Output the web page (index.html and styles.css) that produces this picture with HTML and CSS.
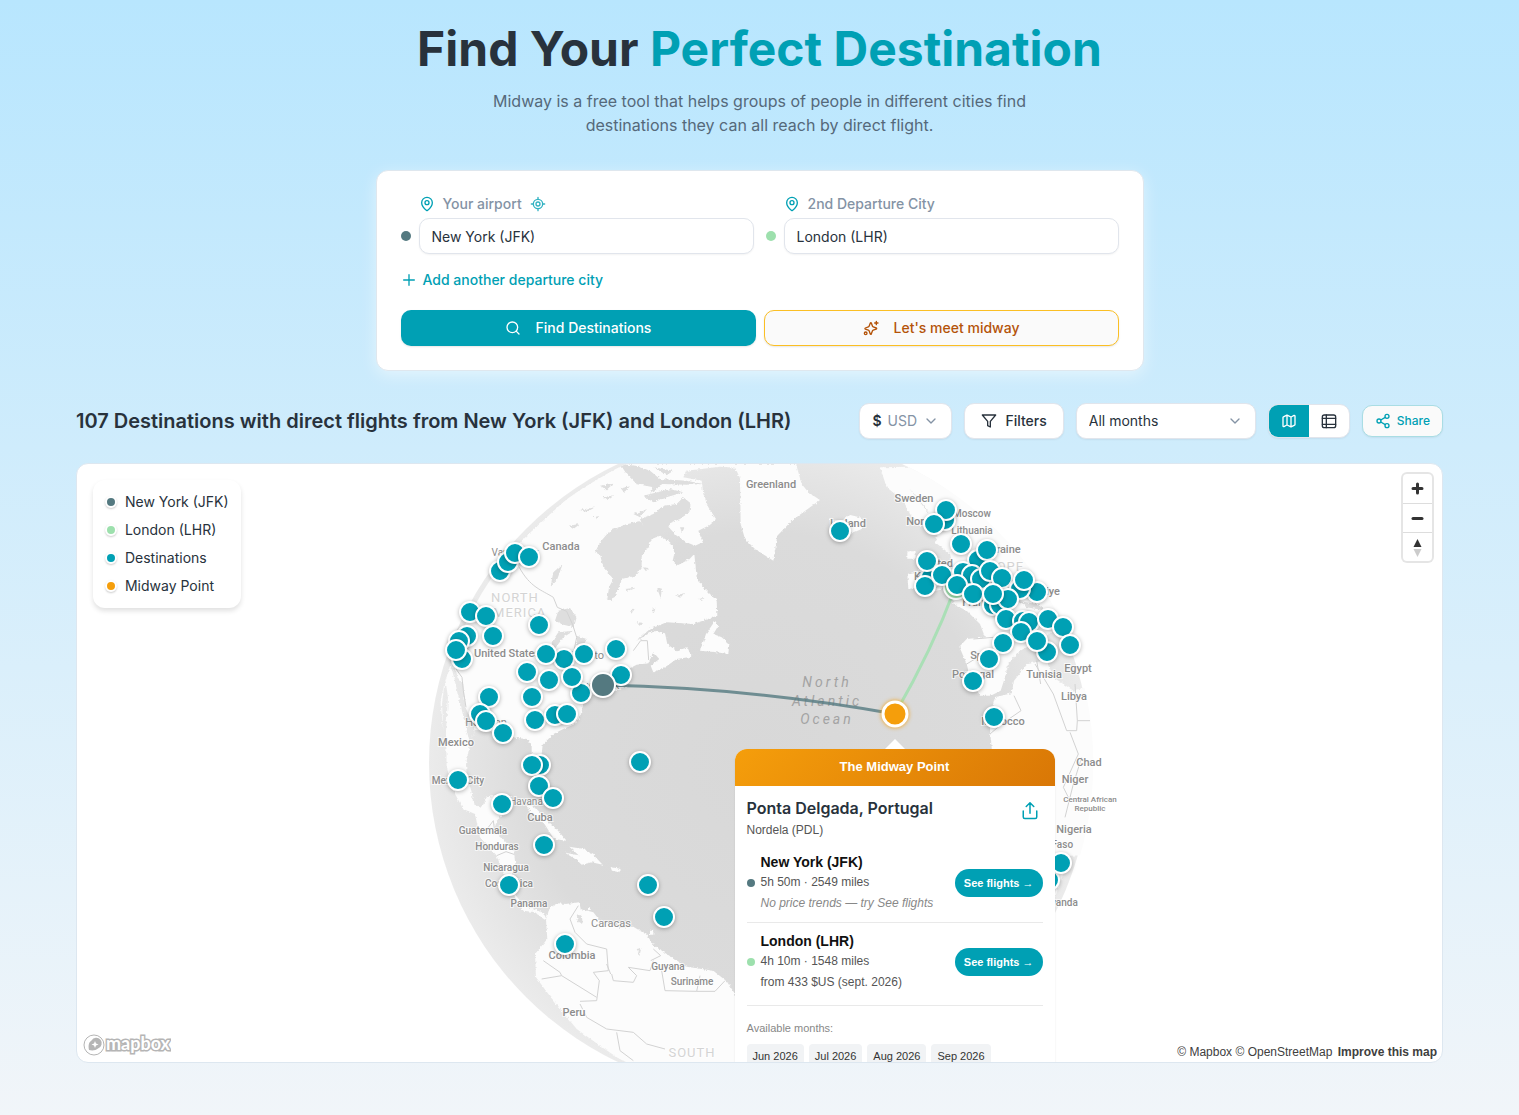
FILE: index.html
```html
<!DOCTYPE html>
<html lang="en">
<head>
    <meta charset="UTF-8">
    <meta name="viewport" content="width=device-width, initial-scale=1.0">
    <title>Midway - Find Your Perfect Destination</title>
    <link rel="stylesheet" href="styles.css">
</head>
<body>
    <header class="hero">
        <h1>Find Your <span>Perfect Destination</span></h1>
        <p>Midway is a free tool that helps groups of people in different cities find destinations they can all reach by direct flight.</p>
    </header>

    <form class="search-card" onsubmit="return false">
        <div class="cities">
            <div class="city">
                <div class="city-label">
                    <svg class="icon" viewBox="0 0 24 24"><path d="M20 10c0 5-5.500 10.200-7.400 11.800a1 1 0 0 1-1.200 0C9.500 20.200 4 15 4 10a8 8 0 0 1 16 0"/><circle cx="12" cy="10" r="3"/></svg>
                    <label for="city-1">Your airport</label>
                    <button type="button" class="locate" aria-label="Use my location">
                        <svg class="icon" viewBox="0 0 24 24"><path d="M2 12h3M19 12h3M12 2v3M12 19v3"/><circle cx="12" cy="12" r="7"/><circle cx="12" cy="12" r="3"/></svg>
                    </button>
                </div>
                <div class="city-field">
                    <span class="dot slate"></span>
                    <input type="text" id="city-1" value="New York (JFK)">
                </div>
            </div>
            <div class="city">
                <div class="city-label">
                    <svg class="icon" viewBox="0 0 24 24"><path d="M20 10c0 5-5.500 10.200-7.400 11.800a1 1 0 0 1-1.200 0C9.500 20.200 4 15 4 10a8 8 0 0 1 16 0"/><circle cx="12" cy="10" r="3"/></svg>
                    <label for="city-2">2nd Departure City</label>
                </div>
                <div class="city-field">
                    <span class="dot green"></span>
                    <input type="text" id="city-2" value="London (LHR)">
                </div>
            </div>
        </div>
        <button type="button" class="add-city">
            <svg class="icon" viewBox="0 0 24 24"><path d="M4 12h16M12 4v16"/></svg>
            Add another departure city
        </button>
        <div class="actions">
            <button type="submit" class="btn-find">
                <svg class="icon" viewBox="0 0 24 24"><circle cx="11" cy="11" r="8"/><path d="m21 21-4.300-4.300"/></svg>
                Find Destinations
            </button>
            <button type="button" class="btn-midway">
                <svg class="icon" viewBox="0 0 24 24"><path d="M11 4.500c.3-.7 1.200-.7 1.500 0l1.600 4.600a2 2 0 0 0 1.200 1.200l4.600 1.700c.8.3.8 1.300 0 1.600l-4.600 1.600a2 2 0 0 0-1.200 1.200l-1.700 4.700c-.2.700-1.200.7-1.500 0l-1.600-4.700a2 2 0 0 0-1.200-1.200l-4.600-1.600c-.8-.3-.8-1.300 0-1.600l4.600-1.700a2 2 0 0 0 1.200-1.200z"/><path d="M20 2v5M17.500 4.500h5"/><circle cx="4" cy="20" r="2"/></svg>
                Let's meet midway
            </button>
        </div>
    </form>

    <main class="results">
        <div class="toolbar">
            <h2>107 Destinations with direct flights from New York (JFK) and London (LHR)</h2>
            <div class="tools">
                <div class="select currency">
                    <label for="currency">$</label>
                    <select id="currency"><option>USD</option><option>EUR</option><option>GBP</option></select>
                    <svg class="icon chevron" viewBox="0 0 24 24"><path d="m6 9 6 6 6-6"/></svg>
                </div>
                <button type="button" class="btn-filters">
                    <svg class="icon" viewBox="0 0 24 24"><path d="M22 3H2l8 9.500V19l4 2v-8.500z"/></svg>
                    Filters
                </button>
                <div class="select months">
                    <select aria-label="Month"><option>All months</option></select>
                    <svg class="icon chevron" viewBox="0 0 24 24"><path d="m6 9 6 6 6-6"/></svg>
                </div>
                <div class="view-toggle">
                    <button type="button" class="active" aria-label="Map view">
                        <svg class="icon" viewBox="0 0 24 24"><path d="M14.100 5.600a2 2 0 0 0 1.800 0l3.700-1.900A1 1 0 0 1 21 4.600v12.800a1 1 0 0 1-.6.900l-4.500 2.200a2 2 0 0 1-1.800 0l-4.200-2.100a2 2 0 0 0-1.800 0l-3.700 1.900A1 1 0 0 1 3 19.400V6.600a1 1 0 0 1 .6-.9l4.500-2.200a2 2 0 0 1 1.800 0zM15 5.800v15M9 3.200v15"/></svg>
                    </button>
                    <button type="button" aria-label="Table view">
                        <svg class="icon" viewBox="0 0 24 24"><rect x="2" y="3" width="20" height="19" rx="3"/><path d="M8 3v19M2 8h20M2 17h20"/></svg>
                    </button>
                </div>
                <button type="button" class="btn-share">
                    <svg class="icon" viewBox="0 0 24 24"><circle cx="18" cy="5" r="3"/><circle cx="6" cy="12" r="3"/><circle cx="18" cy="19" r="3"/><path d="m8.600 13.500 6.800 4M15.400 6.500l-6.800 4"/></svg>
                    Share
                </button>
            </div>
        </div>

        <div class="map">
            <div class="globe">
                <svg class="globe-canvas" viewBox="400 464 720 598">
                    <defs>
                        <radialGradient id="ocean">
                            <stop offset="0" stop-color="#d8d8d8"/>
                            <stop offset="0.7" stop-color="#dbdbdb"/>
                            <stop offset="1" stop-color="#ebebeb"/>
                        </radialGradient>
                        <clipPath id="disc"><circle cx="1032" cy="897" r="988"/></clipPath>
                        <filter id="coast" x="0" y="0" width="1" height="1">
                            <feTurbulence type="fractalNoise" baseFrequency="0.12" numOctaves="3" seed="4"/>
                            <feDisplacementMap in="SourceGraphic" scale="10" xChannelSelector="R" yChannelSelector="G"/>
                        </filter>
                    </defs>
                    <circle cx="760" cy="763" r="331" fill="url(#ocean)"/>
                    <!-- land is drawn three times larger than the globe -->
                    <svg x="420" y="464" width="700" height="598" viewBox="0 0 2100 1794">
                        <g clip-path="url(#disc)">
                            <g class="land" filter="url(#coast)">
                                <!-- North and Central America -->
                                <path d="M610 0 450 95 300 235 205 350 140 450 100 560 92 600 108 620 112 640 130 660 136 730 150 760 148 740 165 800 150 840 138 900 140 930 155 985 160 1020 185 1032 200 1000 240 992 275 1000 262 1040 230 1070 222 1100 250 1125 282 1165 286 1200 275 1240 285 1290 310 1325 345 1335 372 1350 382 1372 370 1364 345 1345 310 1340 285 1300 255 1235 228 1172 180 1120 165 1050 130 1035 105 990 80 910 78 800 84 700 75 640 66 720 70 800 60 700 92 600 150 840 165 798 210 800 250 812 290 822 322 825 335 845 335 880 345 925 362 925 365 870 368 842 400 810 430 795 465 780 482 755 490 720 505 700 520 690 560 690 605 672 625 665 605 645 612 622 650 602 685 598 700 565 718 585 692 605 700 625 735 610 770 585 815 578 802 550 770 562 742 540 735 508 700 500 650 530 690 495 740 475 820 480 892 455 890 410 850 370 830 340 823 270 808 286 770 305 758 290 765 260 750 235 720 215 695 225 700 200 745 188 770 215 800 235 825 245 848 235 835 200 862 187 888 165 865 130 850 90 845 50 790 40 800 20 900 8 960 12 960 0Z"/>
                                <path d="M840 560 858 510 885 470 895 485 880 510 905 520 928 540 925 570 890 565Z"/>
                                <!-- Greenland and Iceland -->
                                <path d="M940 0 960 42 962 180 975 225 1005 255 1060 290 1072 215 1115 170 1200 108 1165 85 1145 60 1128 0Z"/>
                                <path d="M1228 162 1258 178 1288 152 1330 163 1325 195 1285 212 1240 200Z"/>
                                <!-- Caribbean -->
                                <path d="M318 1022 350 1035 385 1072 412 1098 440 1130 402 1125 372 1078 335 1050Z"/>
                                <path d="M448 1148 490 1155 520 1172 548 1202 515 1195 485 1202 470 1188 435 1166 476 1174Z"/>
                                <path d="M572 1210 602 1215 598 1225 576 1220ZM690 1400h10v12h-10zM504 1330h8v8h-8z"/>
                                <!-- South America -->
                                <path d="M378 1370 388 1332 412 1318 440 1320 478 1315 482 1335 520 1345 540 1370 600 1392 640 1388 680 1412 700 1442 740 1470 800 1508 880 1520 920 1552 945 1590 1000 1800 620 1800 540 1745 470 1695 425 1640 385 1590 348 1540 345 1470 382 1425Z"/>
                                <!-- Europe -->
                                <path d="M1380 10 1400 70 1450 110 1470 150 1500 185 1530 190 1555 205 1545 235 1590 270 1600 310 1570 350 1600 385 1600 420 1640 440 1680 480 1695 520 1640 525 1618 548 1640 600 1650 640 1680 695 1712 695 1742 680 1755 640 1765 600 1800 560 1860 530 1900 500 1960 540 2000 600 2100 500 2000 0Z"/>
                                <path d="M1490 290 1530 265 1560 330 1592 352 1560 378 1520 385ZM1462 262h25v22h-25zM1462 330 1495 320 1500 370 1465 375Z"/>
                                <!-- Africa -->
                                <path d="M1725 700 1775 688 1782 650 1822 600 1880 588 1900 640 1960 680 2100 640 2100 1170 1950 1175 1905 1300 1870 1230 1720 900 1710 800 1712 750Z"/>
                            </g>
                            <g class="water" filter="url(#coast)">
                                <path d="M525 265 540 235 570 200 620 180 660 172 675 192 710 210 695 225 685 250 665 275 665 310 645 335 605 345 595 375 577 412 562 405 567 370 580 345 550 310 540 272Z"/>
                                <path d="M660 165 700 150 730 125 770 120 790 100 812 118 808 145 780 165 750 178 740 200 700 215 670 190ZM600 0 650 5 690 20 720 45 800 50 850 60 800 62 730 60 690 90 700 70 650 60 620 30Z"/>
                                <path d="M670 95 750 75 790 85 740 100 700 115ZM640 150l40-14-20 24zM700 10l60 10-20 14zM780 190l14 0-8 16zM600 75l30-8-16 16zM550 100l30-6-20 14z"/>
                                <path d="M480 138 525 130 500 145ZM445 185 480 180 460 195ZM540 65l40-6-20 18zM520 160l18-4-8 10z"/>
                                <path d="M400 325 428 300 412 345 392 365ZM415 440 450 432 470 460 462 490 430 482 405 470ZM395 535 415 505 462 500 430 520 400 560ZM470 515 500 525 490 545 472 548ZM470 1355 485 1352 488 1378 475 1375ZM650 1455l14-3-6 25z"/>
                                <path d="M615 375l34-4-24 10zM668 310l18 2-8 10zM710 370l16 4-4 28zM765 395l28-8-12 14zM695 435l12-4-6 18zM630 440l16-8-10 14zM650 475l20 2-12 8zM835 405l24-4-18 8z"/>
                                <path d="M1465 70 1500 110 1530 150 1550 170 1520 140ZM1790 410 1850 420 1880 440 1820 430Z"/>
                            </g>
                            <g class="borders">
                                <path d="M298 310C330 370 365 378 400 400L412 430 440 442 458 482 470 520 462 560 500 590M640 560 662 530 682 530 686 588M108 615l18 25 4 40 8 50M158 735l22 40"/>
                                <path d="M180 1110l25-20 15-20 5 40M230 1175l28-12 24 8M475 1325 450 1365 465 1405 500 1440 560 1455 565 1520 520 1525 538 1550 530 1610 480 1612M370 1490 420 1525 425 1535 365 1545M425 1535 530 1600M575 1530 580 1550 640 1555 650 1535 625 1510 690 1520 700 1490M560 1500 572 1530M700 1455l22 20-30 15M725 1520 735 1580 830 1582 885 1582 915 1550M830 1582 840 1535M480 1620 500 1660 560 1695 640 1705 680 1740 735 1755M590 1705 600 1760 640 1790"/>
                                <path d="M1640 600l25-15M1710 810 1745 780 1803 740 1782 695M1845 600 1870 640 1900 690 1940 800 1970 800 1972 770 2010 770M1850 590 1862 660M1965 660 1972 770M1660 525 1720 520M1950 805 1975 870 1930 970 1945 1000M1985 880 1960 960 1935 1060"/>
                            </g>
                        </g>
                    </svg>
                    <g class="labels" id="labels"></g>
                    <g class="ocean-label">
                        <text x="827" y="687">North</text>
                        <text x="827" y="706">Atlantic</text>
                        <text x="827" y="724">Ocean</text>
                    </g>
                    <path class="route slate" d="M603 685Q752 688 895 714"/>
                    <path class="route green" d="M955 588Q932 650 895 714"/>
                    <circle class="pin origin-green" cx="956" cy="587" r="12"/>
                    <g id="pins"></g>
                    <circle class="pin origin-slate" cx="603" cy="685" r="12"/>
                    <circle class="pin midway" cx="895" cy="714" r="12"/>
                </svg>

                <div class="popup">
                    <div class="popup-header">The Midway Point</div>
                    <div class="popup-body">
                        <div class="popup-title">
                            <div>
                                <h3>Ponta Delgada, Portugal</h3>
                                <p>Nordela (PDL)</p>
                            </div>
                            <button type="button" aria-label="Share destination">
                                <svg class="icon" viewBox="0 0 24 24"><path d="M3 12v8a2 2 0 0 0 2 2h14a2 2 0 0 0 2-2v-8M17 6l-5-5-5 5M12 1v14"/></svg>
                            </button>
                        </div>
                        <div class="flight">
                            <span class="dot slate"></span>
                            <div class="flight-info">
                                <strong>New York (JFK)</strong>
                                <span>5h 50m · 2549 miles</span>
                                <em>No price trends — try See flights</em>
                            </div>
                            <a href="#jfk">See flights →</a>
                        </div>
                        <div class="flight">
                            <span class="dot green"></span>
                            <div class="flight-info">
                                <strong>London (LHR)</strong>
                                <span>4h 10m · 1548 miles</span>
                                <span class="price">from 433 $US (sept. 2026)</span>
                            </div>
                            <a href="#lhr">See flights →</a>
                        </div>
                        <p class="months-title">Available months:</p>
                        <div class="month-list">
                            <span>Jun 2026</span>
                            <span>Jul 2026</span>
                            <span>Aug 2026</span>
                            <span>Sep 2026</span>
                        </div>
                    </div>
                </div>
            </div>

            <ul class="legend">
                <li><span class="dot slate"></span>New York (JFK)</li>
                <li><span class="dot green"></span>London (LHR)</li>
                <li><span class="dot teal"></span>Destinations</li>
                <li><span class="dot orange"></span>Midway Point</li>
            </ul>

            <div class="map-controls">
                <button type="button" aria-label="Zoom in"><svg viewBox="0 0 29 29"><path class="stroke" d="M10 14.500h9M14.500 10v9"/></svg></button>
                <button type="button" aria-label="Zoom out"><svg viewBox="0 0 29 29"><path class="stroke" d="M10 14.500h9"/></svg></button>
                <button type="button" aria-label="Reset bearing"><svg viewBox="0 0 29 29"><path fill="#333" d="m10.500 14 4-8 4 8z"/><path fill="#ccc" d="m10.500 16 4 8 4-8z"/></svg></button>
            </div>

            <svg class="map-logo" viewBox="0 0 88 24">
                <circle cx="11" cy="12" r="10"/>
                <path class="mark" d="M6 17c-1-5 0-8 2.500-9.500A5.500 5.500 0 1 1 15 15.500C13 17.500 9 18 6 17z"/>
                <path class="star" d="m12 8 1 2.500 2.500 1-2.500 1-1 2.500-1-2.500-2.500-1 2.500-1z"/>
                <text x="23" y="17">mapbox</text>
            </svg>

            <div class="attribution">
                <a href="#mapbox">© Mapbox</a>
                <a href="#osm">© OpenStreetMap</a>
                <a href="#improve"><b>Improve this map</b></a>
            </div>
        </div>
    </main>

    <script src="map.js"></script>
</body>
</html>
```

FILE: styles.css
```css
* {
    box-sizing: border-box;
}
body {
    margin: 0;
    min-height: 100vh;
    padding-bottom: 52px;
    font-family: Inter, "Liberation Sans", sans-serif;
    font-size: 14px;
    line-height: 20px;
    color: #28323c;
    background: linear-gradient(to bottom, #b8e6fe, #f1f5f9);
}
button, input, select {
    font: inherit;
    color: inherit;
}
button {
    display: inline-flex;
    align-items: center;
    justify-content: center;
    padding: 0;
    border: none;
    background: none;
    cursor: pointer;
}
a {
    color: inherit;
    text-decoration: none;
}
.icon {
    width: 16px;
    height: 16px;
    flex-shrink: 0;
    fill: none;
    stroke: currentColor;
    stroke-width: 2;
    stroke-linecap: round;
    stroke-linejoin: round;
}
.dot {
    width: 10px;
    height: 10px;
    flex-shrink: 0;
    border-radius: 50%;
}
.dot.slate {
    background-color: #547980;
}
.dot.green {
    background-color: #9de0ad;
}
.dot.teal {
    background-color: #00a0b4;
}
.dot.orange {
    background-color: #f59e0b;
}

/* Hero */
.hero {
    padding-top: 19px;
    text-align: center;
}
.hero h1 {
    margin: 0;
    font-size: 48px;
    line-height: 60px;
    font-weight: 700;
}
.hero h1 span {
    color: #00a0b4;
}
.hero p {
    max-width: 576px;
    margin: 10px auto 0;
    font-size: 16px;
    line-height: 24px;
    color: #55697a;
}

/* Search card */
.search-card {
    max-width: 768px;
    margin: 33px auto 0;
    padding: 24px;
    border: 1px solid #dfe7ee;
    border-radius: 12px;
    background-color: #fff;
    box-shadow: 0 4px 16px rgba(255, 255, 255, 0.5);
}
.cities {
    display: grid;
    grid-template-columns: 1fr 1fr;
    gap: 12px;
}
.city-label {
    display: flex;
    align-items: center;
    gap: 8px;
    height: 18px;
    margin: 0 0 5px 18px;
    font-weight: 500;
    color: #8493a5;
}
.city-label .icon {
    color: #00a0b4;
}
.locate {
    opacity: 0.8;
}
.city-field {
    display: flex;
    align-items: center;
    gap: 8px;
}
.city-field input {
    width: 100%;
    height: 36px;
    padding: 0 12px;
    border: 1px solid #e1e5ec;
    border-radius: 10px;
    background-color: #fff;
    box-shadow: 0 1px 2px rgba(0, 0, 0, 0.05);
}
.add-city {
    gap: 6px;
    height: 20px;
    margin-top: 16px;
    font-weight: 500;
    color: #00a0b4;
}
.actions {
    display: grid;
    grid-template-columns: 1fr 1fr;
    gap: 8px;
    margin-top: 17px;
}
.actions button {
    gap: 15px;
    height: 36px;
    border-radius: 10px;
    font-weight: 500;
    box-shadow: 0 1px 2px rgba(0, 0, 0, 0.1);
}
.actions .btn-find {
    color: #fff;
    background-color: #00a0b4;
}
.actions .btn-midway {
    border: 1px solid #fbbf24;
    color: #b45309;
    background-color: #fafafa;
}

/* Results toolbar */
.results {
    width: 90%;
    margin: 32px auto 0;
}
.toolbar {
    display: flex;
    align-items: center;
    justify-content: space-between;
    height: 36px;
}
.toolbar h2 {
    margin: 0;
    font-size: 20px;
    line-height: 28px;
    font-weight: 600;
}
.tools {
    display: flex;
    align-items: center;
    gap: 12px;
}
.select, .btn-filters, .view-toggle, .btn-share {
    border: 1px solid #e1e5ec;
    border-radius: 10px;
    background-color: #fff;
    box-shadow: 0 1px 2px rgba(0, 0, 0, 0.06);
}
.select {
    display: flex;
    align-items: center;
    position: relative;
    height: 36px;
}
.select select {
    width: 100%;
    height: 34px;
    padding: 0 12px;
    border: none;
    border-radius: 10px;
    background: none;
    appearance: none;
}
.chevron {
    position: absolute;
    right: 12px;
    color: #8493a5;
    pointer-events: none;
}
.currency {
    width: 93px;
    padding-left: 12px;
}
.currency label {
    font-weight: 600;
}
.currency select {
    padding: 0 6px;
    color: #8493a5;
}
.months {
    width: 180px;
}
.btn-filters {
    gap: 8px;
    height: 36px;
    padding: 0 16px;
    font-weight: 500;
}
.view-toggle {
    display: flex;
    height: 34px;
    overflow: hidden;
}
.view-toggle button {
    width: 40px;
}
.view-toggle .active {
    color: #fff;
    background-color: #00a0b4;
}
.btn-share {
    gap: 6px;
    height: 32px;
    padding: 0 12px;
    border-color: #a9dde4;
    font-size: 12px;
    font-weight: 500;
    color: #00a0b4;
    background-color: #fafafa;
}

/* Map */
.map {
    position: relative;
    height: 600px;
    margin-top: 24px;
    border: 1px solid #dde7f0;
    border-radius: 12px;
    background-color: #fff;
    overflow: hidden;
}
.globe {
    position: relative;
    width: 720px;
    height: 598px;
    margin: 0 auto;
}
.globe-canvas {
    display: block;
    width: 100%;
    height: 100%;
}
.land {
    fill: #fcfcfc;
}
.water {
    fill: #dedede;
}
.borders {
    fill: none;
    stroke: #d2d2d2;
    stroke-width: 3;
    stroke-linejoin: round;
}
.labels {
    font-family: Roboto, "Liberation Sans", sans-serif;
    font-size: 11px;
    font-weight: 500;
    fill: #8c8c8c;
    stroke: #fff;
    stroke-width: 2px;
    stroke-opacity: 0.7;
    paint-order: stroke;
    text-anchor: middle;
}
.labels .city-name {
    font-weight: 400;
}
.labels .small {
    font-size: 10px;
}
.labels .tiny {
    font-size: 8px;
}
.labels .continent {
    font-size: 13px;
    font-weight: 400;
    letter-spacing: 1px;
    fill: #d4d4d4;
}
.ocean-label {
    font-family: Roboto, "Liberation Sans", sans-serif;
    font-size: 14px;
    font-style: italic;
    letter-spacing: 3px;
    fill: #a3a3a3;
    text-anchor: middle;
}
.route {
    fill: none;
    stroke-width: 3;
    stroke-opacity: 0.8;
}
.route.slate {
    stroke: #547980;
}
.route.green {
    stroke: #9de0ad;
}
.pin {
    fill: #00a0b4;
    stroke: #fff;
    stroke-width: 2;
    filter: drop-shadow(0 1px 2px rgba(0, 0, 0, 0.3));
}
.pin.origin-slate {
    fill: #547980;
}
.pin.origin-green {
    fill: #9de0ad;
}
.pin.midway {
    fill: #f59e0b;
    stroke-width: 3;
    filter: drop-shadow(0 0 2px #f59e0b);
}

/* Popup */
.popup {
    position: absolute;
    top: 285px;
    left: 335px;
    width: 320px;
    border-radius: 12px;
    background-color: #fff;
    box-shadow: 0 1px 2px rgba(0, 0, 0, 0.1);
    font-family: "Liberation Sans", Arial, sans-serif;
    font-size: 12px;
}
.popup::before {
    content: "";
    position: absolute;
    top: -10px;
    left: 50%;
    margin-left: -10px;
    border: 10px solid transparent;
    border-top: none;
    border-bottom-color: #fff;
}
.popup-header {
    position: relative;
    padding: 8px 12px 9px;
    border-radius: 12px 12px 0 0;
    color: #fff;
    font-size: 13px;
    font-weight: 700;
    text-align: center;
    background: linear-gradient(135deg, #f59e0b, #d97706);
}
.popup-body {
    padding: 12px;
}
.popup-title {
    display: flex;
    justify-content: space-between;
    margin-bottom: 4px;
}
.popup-title h3 {
    margin: 0 0 2px;
    font-family: Inter, "Liberation Sans", sans-serif;
    font-size: 16px;
    font-weight: 600;
}
.popup-title p {
    margin: 0;
    color: #555;
}
.popup-title button {
    width: 26px;
    height: 26px;
    color: #00a0b4;
}
.popup-title .icon {
    width: 18px;
    height: 18px;
}
.flight {
    display: flex;
    align-items: center;
    gap: 6px;
    padding: 8px 0;
    border-bottom: 1px solid #e9e9e9;
}
.flight + .flight {
    padding-bottom: 12px;
}
.popup .dot {
    width: 8px;
    height: 8px;
}
.flight-info {
    display: flex;
    flex-direction: column;
    flex: 1;
    color: #555;
}
.flight-info strong {
    font-size: 14px;
    color: #111;
}
.flight-info em {
    line-height: 22px;
    color: #888;
}
.flight-info .price {
    line-height: 22px;
}
.flight a {
    padding: 0 9px;
    border-radius: 14px;
    font-size: 11px;
    font-weight: 700;
    line-height: 28px;
    color: #fff;
    background-color: #00a0b4;
}
.months-title {
    margin: 12px 0 6px;
    font-size: 11px;
    color: #888;
}
.month-list {
    display: flex;
    gap: 5px;
}
.month-list span {
    padding: 2px 6px;
    border-radius: 4px;
    font-size: 11px;
    color: #333;
    background-color: #f1f3f5;
}

/* Things that sit over the map */
.legend {
    position: absolute;
    top: 16px;
    left: 16px;
    margin: 0;
    padding: 8px 12px;
    border-radius: 12px;
    list-style: none;
    background-color: #fff;
    box-shadow: 0 3px 5px rgba(0, 0, 0, 0.12);
}
.legend li {
    display: flex;
    align-items: center;
    gap: 8px;
    line-height: 28px;
}
.legend .dot {
    width: 12px;
    height: 12px;
    border: 2px solid #fff;
    box-shadow: 0 1px 2px rgba(0, 0, 0, 0.2);
}
.map-controls {
    position: absolute;
    top: 10px;
    right: 10px;
    display: flex;
    flex-direction: column;
    border-radius: 4px;
    background-color: #fff;
    box-shadow: 0 0 0 2px rgba(0, 0, 0, 0.1);
}
.map-controls button {
    width: 29px;
    height: 29px;
}
.map-controls button + button {
    border-top: 1px solid #ddd;
}
.map-controls svg {
    width: 29px;
    height: 29px;
}
.map-controls .stroke {
    stroke: #333;
    stroke-width: 3;
    stroke-linecap: round;
}
.map-logo {
    position: absolute;
    left: 6px;
    bottom: 5px;
    width: 88px;
    height: 24px;
    fill: #fff;
    stroke: #b5b5b5;
}
.map-logo .mark {
    fill: #b5b5b5;
    stroke: none;
}
.map-logo .star {
    stroke: none;
}
.map-logo text {
    font-family: Lato, sans-serif;
    font-size: 18px;
    font-weight: 700;
    stroke-width: 3px;
    paint-order: stroke;
}
.attribution {
    position: absolute;
    right: 0;
    bottom: 0;
    padding: 0 5px;
    font-family: "Liberation Sans", Arial, sans-serif;
    font-size: 12px;
    color: #404040;
}
.attribution b {
    margin-left: 2px;
}
```

FILE: map.js
```js
// destination airports on the globe, drawn in this order
const pins = [
    [500, 571], [508, 562], [515, 553], [529, 557],
    [470, 612], [486, 616], [467, 636], [459, 641], [462, 659], [456, 650], [493, 636], [539, 625],
    [616, 649], [621, 675], [564, 659], [584, 654], [546, 654], [527, 672], [549, 680], [581, 693], [572, 677],
    [532, 697], [489, 697], [480, 714], [486, 721], [503, 733], [535, 720], [555, 715], [567, 714],
    [540, 765], [532, 765], [640, 762], [458, 780], [539, 786], [553, 798], [502, 804],
    [544, 845], [509, 885], [648, 885], [664, 917], [565, 944],
    [840, 531], [945, 520], [946, 510], [934, 524], [961, 544], [978, 560], [987, 550],
    [931, 577], [927, 561], [925, 586], [942, 575], [963, 572], [972, 575], [981, 579], [957, 585],
    [990, 571], [1002, 578], [1037, 592], [1020, 589], [1024, 580], [973, 594], [993, 605], [1000, 605],
    [1008, 599], [993, 594], [1006, 619], [1023, 621], [1029, 622], [1021, 632], [1048, 619], [1063, 627],
    [1070, 645], [1047, 652], [1037, 641], [1003, 643], [989, 659], [973, 681], [994, 717],
    [1049, 880], [1061, 863]
];

const labels = [
    ['Greenland', 771, 488], ['Canada', 561, 550], ['Vancouver', 515, 556, 'small city-name'],
    ['NORTH', 515, 602, 'continent'], ['AMERICA', 515, 617, 'continent'],
    ['United States', 507, 657], ['Toronto', 585, 659, 'city-name'], ['New York', 596, 689, 'city-name'],
    ['Houston', 486, 726, 'city-name'], ['Mexico', 456, 746], ['Mexico City', 458, 784, 'small'],
    ['Havana', 526, 805, 'small city-name'], ['Cuba', 540, 821], ['Guatemala', 483, 834, 'small'],
    ['Honduras', 497, 850, 'small'], ['Nicaragua', 506, 871, 'small'], ['Costa Rica', 509, 887, 'small'],
    ['Panama', 529, 907, 'small'], ['Caracas', 611, 927, 'city-name'], ['Colombia', 572, 959],
    ['Guyana', 668, 970, 'small'], ['Suriname', 692, 985, 'small'], ['Peru', 574, 1016],
    ['SOUTH', 692, 1057, 'continent'],
    ['Iceland', 848, 527], ['Sweden', 914, 502], ['Norway', 925, 525], ['Moscow', 972, 517, 'small'],
    ['Lithuania', 972, 534, 'small'], ['Ukraine', 1002, 553], ['EUROPE', 997, 571, 'continent'],
    ['United', 937, 567], ['Kingdom', 936, 580], ['France', 979, 606], ['Türkiye', 1042, 595],
    ['Spain', 984, 659], ['Portugal', 973, 678], ['Morocco', 1003, 725], ['Tunisia', 1044, 678],
    ['Egypt', 1078, 672], ['Libya', 1074, 700], ['Chad', 1089, 766], ['Niger', 1075, 783],
    ['Central African', 1090, 802, 'tiny'], ['Republic', 1090, 811, 'tiny'], ['Nigeria', 1074, 833],
    ['Burkina Faso', 1044, 848, 'small'], ['Rwanda', 1060, 906, 'small']
];

const svgNs = 'http://www.w3.org/2000/svg';

function renderLabels() {
    const group = document.getElementById('labels');
    labels.forEach(([name, x, y, size]) => {
        const text = document.createElementNS(svgNs, 'text');
        text.setAttribute('x', x);
        text.setAttribute('y', y);
        if (size) text.setAttribute('class', size);
        text.textContent = name;
        group.appendChild(text);
    });
}

function renderPins() {
    const group = document.getElementById('pins');
    pins.forEach(([x, y]) => {
        const circle = document.createElementNS(svgNs, 'circle');
        circle.setAttribute('class', 'pin');
        circle.setAttribute('cx', x);
        circle.setAttribute('cy', y);
        circle.setAttribute('r', 10);
        group.appendChild(circle);
    });
}

renderLabels();
renderPins();
```
